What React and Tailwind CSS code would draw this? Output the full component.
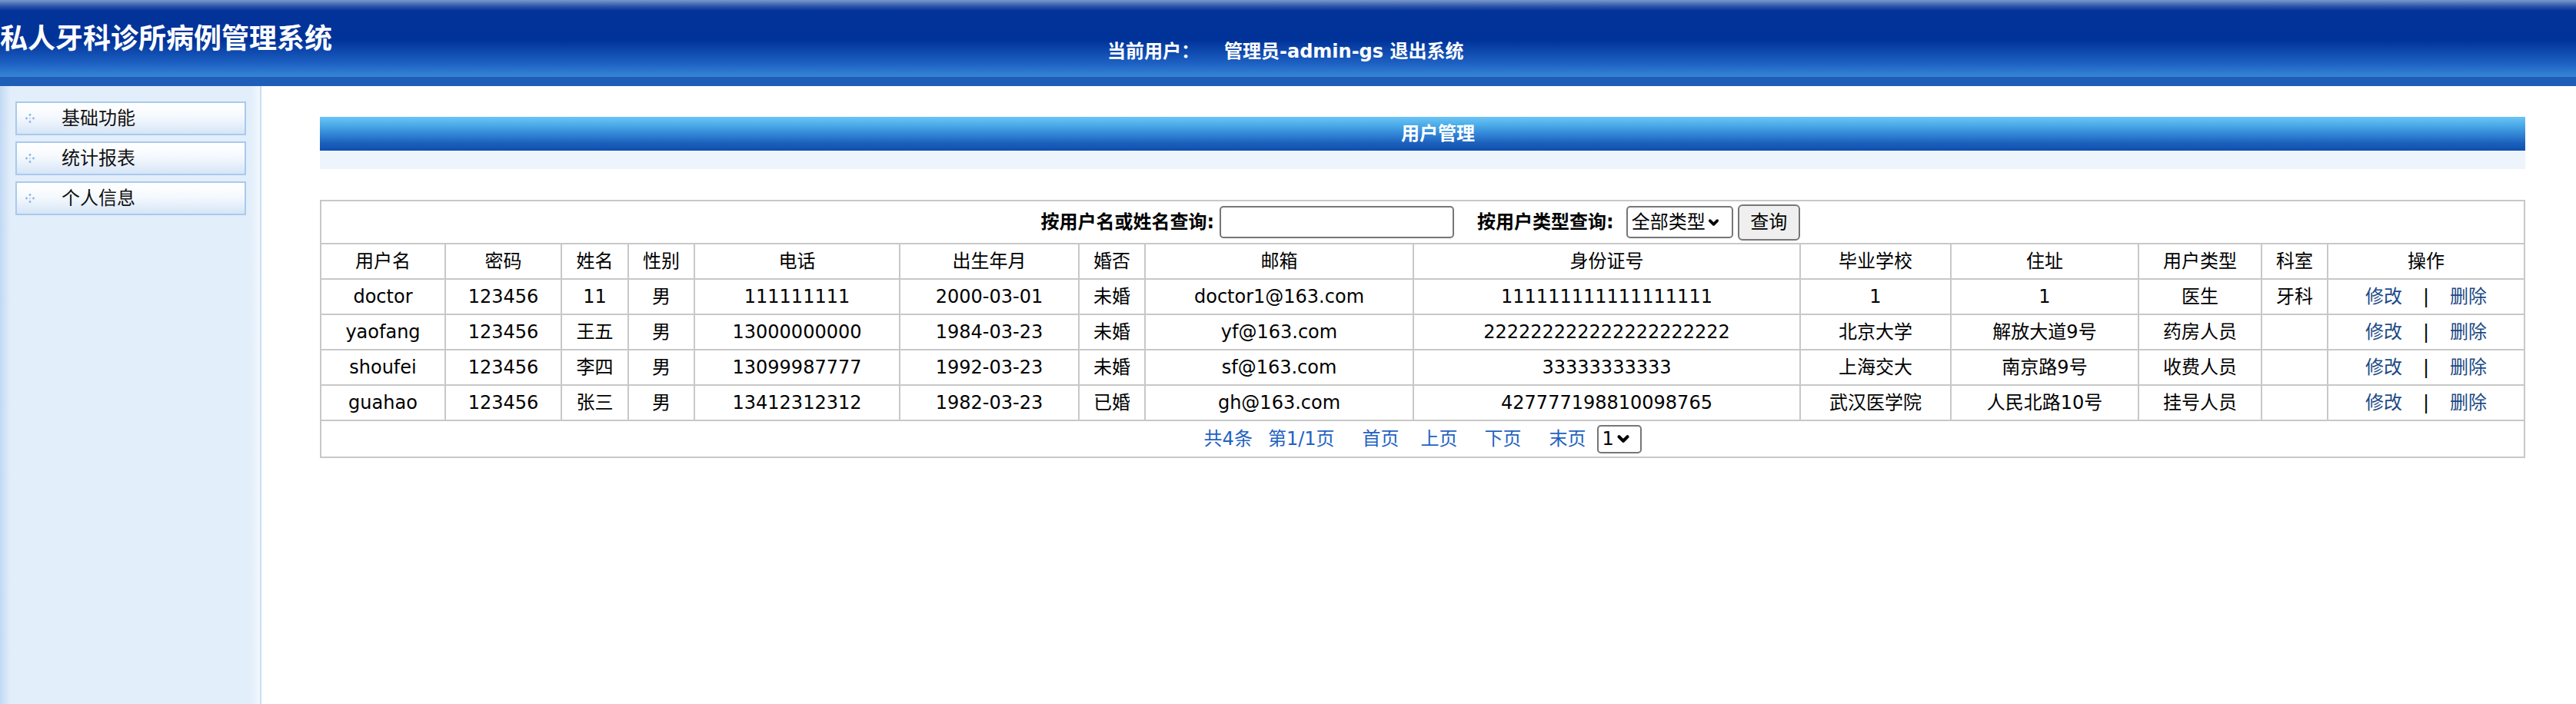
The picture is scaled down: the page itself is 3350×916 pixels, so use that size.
import { ChevronDown } from 'lucide-react';

const menus = ['基础功能', '统计报表', '个人信息'];

const cols = [162, 151, 87, 86, 267, 233, 86, 349, 503, 196, 244, 160, 86, 256];
const heads = ['用户名', '密码', '姓名', '性别', '电话', '出生年月', '婚否', '邮箱', '身份证号', '毕业学校', '住址', '用户类型', '科室', '操作'];

const users = [
  ['doctor', '123456', '11', '男', '111111111', '2000-03-01', '未婚', 'doctor1@163.com', '111111111111111111', '1', '1', '医生', '牙科'],
  ['yaofang', '123456', '王五', '男', '13000000000', '1984-03-23', '未婚', 'yf@163.com', '222222222222222222222', '北京大学', '解放大道9号', '药房人员', ''],
  ['shoufei', '123456', '李四', '男', '13099987777', '1992-03-23', '未婚', 'sf@163.com', '33333333333', '上海交大', '南京路9号', '收费人员', ''],
  ['guahao', '123456', '张三', '男', '13412312312', '1982-03-23', '已婚', 'gh@163.com', '427777198810098765', '武汉医学院', '人民北路10号', '挂号人员', ''],
];

function Dots() {
  return (
    <svg width="12" height="12" viewBox="0 0 12 12" className="shrink-0">
      <circle cx="6" cy="1.5" r="1.4" fill="#8db5e3" />
      <circle cx="1.5" cy="6" r="1.4" fill="#8db5e3" />
      <circle cx="10.5" cy="6" r="1.4" fill="#8db5e3" />
      <circle cx="6" cy="10.5" r="1.4" fill="#8db5e3" />
      <circle cx="6" cy="6" r="1.2" fill="#c6dbf3" />
    </svg>
  );
}

export default function App() {
  return (
    <div className="min-h-screen flex flex-col bg-white text-black font-['DejaVu_Sans','Noto_Sans_CJK_SC',sans-serif]">
      {/* Header */}
      <div className="h-[112px] shrink-0 flex items-start bg-[linear-gradient(to_bottom,#7b98cc_0px,#2c57ab_8px,#033399_14px,#003399_52px,#1d60c2_82px,#3586d6_100px,#1f5eb8_100px,#1f5eb8_112px)]">
        <div className="w-[1440px] shrink-0 pt-[29px] text-[36px] font-bold leading-none text-white font-['Noto_Sans_CJK_SC',sans-serif]">
          私人牙科诊所病例管理系统
        </div>
        <div className="pt-[55px] flex items-center text-[24px] font-bold leading-none text-white">
          <span>当前用户：</span>
          <span className="ml-[32px]">管理员-admin-gs 退出系统</span>
        </div>
      </div>

      <div className="flex flex-1">
        {/* Sidebar */}
        <div className="w-[340px] shrink-0 border-r-2 border-[#c9ddf3] pl-[20px] pr-[18px] pt-[20px] flex flex-col gap-[8px] bg-[linear-gradient(to_right,#c2d9f3_0px,#e2eefa_14px,#e2eefa_326px,#f2f7fd_338px)]">
          {menus.map((m) => (
            <div key={m} className="h-[44px] flex items-center border-2 border-[#a9caef] bg-[linear-gradient(to_bottom,#ffffff_0%,#f5f9fe_45%,#d6e5f7_100%)]">
              <div className="ml-[11px]"><Dots /></div>
              <span className="ml-[35px] text-[24px] leading-none text-[#111]">{m}</span>
            </div>
          ))}
        </div>

        {/* Main */}
        <div className="flex-1 pl-[76px] pr-[67px] pt-[40px]">
          <div className="h-[44px] flex items-center justify-center bg-[linear-gradient(to_bottom,#6cc4f6_0%,#4eaeea_22%,#3387d7_50%,#1b60bc_78%,#0e4fae_100%)]">
            <span className="ml-[40px] text-[24px] font-bold leading-none text-white">用户管理</span>
          </div>
          <div className="h-[24px] bg-[#edf4fb]" />

          <table className="mt-[40px] w-full table-fixed border-collapse border-2 border-[#c8c8c8] text-[24px] leading-none">
            <colgroup>
              {cols.map((w, i) => (
                <col key={i} style={{ width: w }} />
              ))}
            </colgroup>
            <tbody>
              <tr>
                <td colSpan={14} className="h-[56px] border-2 border-[#c8c8c8]">
                  <div className="flex items-center justify-center pr-[6px]">
                    <span className="font-bold">按用户名或姓名查询:</span>
                    <div className="ml-[7px] w-[305px] h-[42px] border-2 border-[#767676] rounded-[5px] bg-white" />
                    <span className="ml-[30px] font-bold">按用户类型查询:</span>
                    <div className="ml-[16px] w-[139px] h-[42px] border-2 border-[#767676] rounded-[5px] flex items-center pl-[5px] gap-[1px]">
                      <span>全部类型</span>
                      <ChevronDown className="w-[19px] h-[19px]" strokeWidth={4.5} />
                    </div>
                    <div className="ml-[6px] w-[81px] h-[47px] border-2 border-[#767676] rounded-[6px] bg-[#efefef] flex items-center justify-center">
                      查询
                    </div>
                  </div>
                </td>
              </tr>
              <tr>
                {heads.map((h) => (
                  <td key={h} className="h-[46px] border-2 border-[#c8c8c8] text-center">{h}</td>
                ))}
              </tr>
              {users.map((u) => (
                <tr key={u[0]}>
                  {u.map((c, i) => (
                    <td key={i} className="h-[46px] border-2 border-[#c8c8c8] text-center whitespace-nowrap">{c}</td>
                  ))}
                  <td className="h-[46px] border-2 border-[#c8c8c8] text-center whitespace-nowrap">
                    <span className="text-[#1b4a86]">修改</span>
                    <span className="mx-[27px]">|</span>
                    <span className="text-[#1b4a86]">删除</span>
                  </td>
                </tr>
              ))}
              <tr>
                <td colSpan={14} className="h-[48px] border-2 border-[#c8c8c8]">
                  <div className="flex items-center justify-center text-[#1f62c2]">
                    <span>共4条</span>
                    <span className="ml-[20px]">第1/1页</span>
                    <span className="ml-[36px]">首页</span>
                    <span className="ml-[28px]">上页</span>
                    <span className="ml-[35px]">下页</span>
                    <span className="ml-[36px]">末页</span>
                    <div className="ml-[14px] w-[58px] h-[37px] border-2 border-[#767676] rounded-[5px] flex items-center pl-[5px] gap-[1px] text-black">
                      <span>1</span>
                      <ChevronDown className="w-[22px] h-[22px]" strokeWidth={4.5} />
                    </div>
                  </div>
                </td>
              </tr>
            </tbody>
          </table>
        </div>
      </div>
    </div>
  );
}
